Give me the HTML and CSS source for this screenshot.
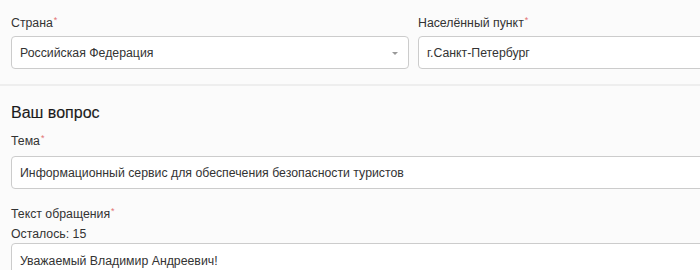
FILE: index.html
```html
<!DOCTYPE html>
<html lang="ru">
<head>
<meta charset="utf-8">
<title>Ваш вопрос</title>
<link rel="stylesheet" href="styles.css">
</head>
<body>
<div class="page">
  <section class="location">
    <div class="field">
      <label class="label">Страна<span class="req">*</span></label>
      <div class="control select">
        <span class="value">Российская Федерация</span>
        <span class="caret"></span>
      </div>
    </div>
    <div class="field">
      <label class="label">Населённый пункт<span class="req">*</span></label>
      <div class="control">
        <span class="value">г.Санкт-Петербург</span>
      </div>
    </div>
  </section>
  <section class="question">
    <h2 class="heading">Ваш вопрос</h2>
    <label class="label label-topic">Тема<span class="req">*</span></label>
    <div class="control">
      <span class="value">Информационный сервис для обеспечения безопасности туристов</span>
    </div>
    <label class="label label-text">Текст обращения<span class="req">*</span></label>
    <div class="counter">Осталось: 15</div>
    <div class="control textarea">
      <span class="value">Уважаемый Владимир Андреевич!</span>
    </div>
  </section>
</div>
</body>
</html>
```
FILE: styles.css
```css
html, body {
  margin: 0;
  padding: 0;
  background: #fbfbfb;
  overflow: hidden;
}
body {
  font-family: "Liberation Sans", Arial, sans-serif;
  font-size: 12.3px;
  color: #333;
}
.page {
  width: 820px;
}
.location {
  display: grid;
  grid-template-columns: 398px 398px;
  column-gap: 9px;
  padding: 13px 0 15px 11px;
  border-bottom: 2px solid #eeeeee;
}
.label {
  display: block;
  line-height: 20px;
  height: 20px;
  color: #333;
}
.req {
  color: #e27272;
  font-size: 9px;
  line-height: 0;
  position: relative;
  top: -4px;
  margin-left: 1px;
}
.field .label {
  margin-bottom: 3px;
}
.control {
  box-sizing: border-box;
  height: 33px;
  border: 1px solid #cccccc;
  border-radius: 4px;
  background: #ffffff;
  padding: 0 8px;
  display: flex;
  align-items: center;
  line-height: 20px;
  color: #333;
  white-space: nowrap;
}
.select .value {
  flex: 1;
}
.caret {
  width: 0;
  height: 0;
  border-left: 3px solid transparent;
  border-right: 3px solid transparent;
  border-top: 3px solid #999;
  margin-right: 2px;
  margin-top: 1px;
}
.question {
  padding: 17px 0 0 11px;
  width: 794px;
}
.heading {
  margin: 0;
  font-size: 16px;
  font-weight: normal;
  line-height: 20px;
  height: 20px;
  color: #1a1a1a;
  -webkit-text-stroke: 0.12px #1a1a1a;
}
.label-topic {
  margin-top: 8px;
  margin-bottom: 5px;
}
.label-text {
  margin-top: 15px;
}
.counter {
  line-height: 20px;
  height: 20px;
}
.textarea {
  height: 60px;
  align-items: flex-start;
  padding-top: 7px;
  margin-top: -1px;
}
```
